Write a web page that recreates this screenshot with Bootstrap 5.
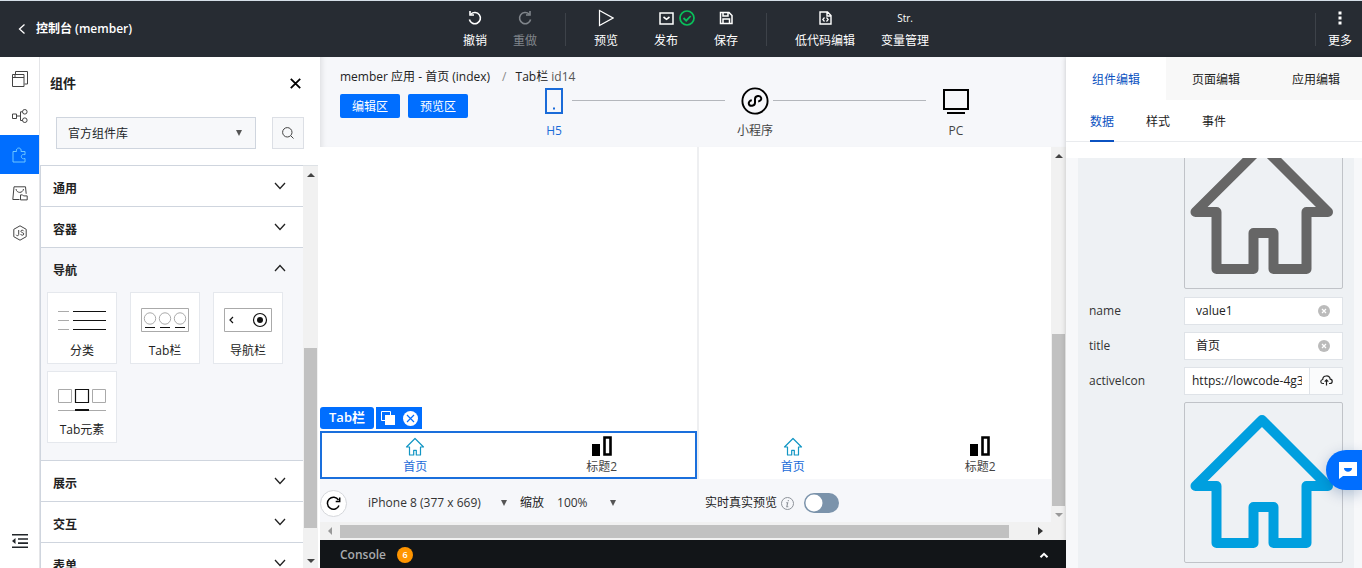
<!DOCTYPE html>
<html lang="zh-CN">
<head>
<meta charset="utf-8">
<meta name="viewport" content="width=device-width, initial-scale=1">
<title>控制台 (member)</title>
<link href="https://cdn.jsdelivr.net/npm/bootstrap@5.3.0/dist/css/bootstrap.min.css" rel="stylesheet">
<style>
  body { font-family: "Open Sans", "Noto Sans CJK SC", sans-serif; font-size: 12px; line-height: 18px; color: #222; background: #fff; }
  button, input, select { font-family: inherit; }
  svg { display: block; flex: none; }
  .plain { border: 0; background: none; padding: 0; color: inherit; }
  .line-icon { fill: none; stroke: currentColor; }

  /* top bar */
  .topbar { background: #272c33; border-top: 1px solid #d5dfe8; height: 57px; color: #fff; }
  .topbar a { color: #fff; text-decoration: none; }
  .side { flex: 1 1 0; }
  .side-end { padding-right: 10px; }
  .toolbar { padding-left: 24px; }
  .tool-set { display: flex; gap: 36px; }
  .tool-set.near { gap: 26px; }
  .tool { display: flex; flex-direction: column; align-items: center; gap: 5px; white-space: nowrap; }
  .tool .glyph { height: 18px; display: flex; align-items: center; position: relative; font-size: 10px; }
  .tool .ok { position: absolute; left: 20px; top: 1px; }
  .tool:disabled { color: #80858b; }
  .rule { width: 1px; height: 33px; background: #3d4249; margin: 0 28px; }

  /* icon rail */
  .rail { width: 40px; border-right: 1px solid #e4e5e8; color: #444; }
  .rail button { width: 39px; height: 39px; display: flex; align-items: center; justify-content: center; }
  .rail .on { background: #006eff; color: #6cc5ff; }

  /* component panel */
  .panel { width: 280px; }
  .panel-head { height: 54px; padding: 0 19px 0 10px; }
  .panel-head h2 { font-size: 13px; margin: 0; padding-top: 2px; }
  .lib { width: 200px; height: 32px; border-radius: 0; border-color: #cfd5de; background-color: #f7f8fa; font-size: 12px; padding: 2px 11px 0; }
  .caret { appearance: none; background-image: url("data:image/svg+xml,%3Csvg xmlns='http://www.w3.org/2000/svg' width='6' height='6'%3E%3Cpath d='M0 0h6L3 6z' fill='%23555'/%3E%3C/svg%3E"); background-repeat: no-repeat; background-size: 6px 6px; background-position: right 13px center; }
  .find { width: 32px; height: 32px; border: 1px solid #dcdfe5; background: #f7f8fa; }
  .list-area { border-left: 1px solid #cfd5de; padding-right: 2px; }
  .group { border-top: 1px solid #cfd5de; }
  .group.open { background: #f6f7fa; height: 213px; }
  .group > button { width: 100%; height: 40px; padding: 6px 17px 0 12px; font-weight: 600; }
  .group > button svg { margin-top: -6px; }
  .tiles { display: flex; flex-wrap: wrap; gap: 7px 13px; padding: 4px 0 0 6px; }
  .tile { width: 70px; height: 72px; background: #fff; border: 1px solid #e5e8ed; display: flex; flex-direction: column; align-items: center; padding: 14px 0 0; gap: 9px; color: #222; }

  /* scroll bars */
  .vbar { width: 15px; background: #f1f1f1; display: flex; flex-direction: column; align-items: center; padding: 7px 0 5px; }
  .vbar .thumb { width: 13px; height: 172px; background: #c1c1c1; margin: auto 0 7px; }
  .list-area .thumb { height: 180px; margin-bottom: 31px; }
  .hbar { height: 18px; background: #f1f1f1; padding-left: 4px; }
  .hbar .thumb { height: 13px; background: #c1c1c1; flex: 1; }
  .hbar .to-end { margin: 0 23px 0 29px; }

  /* stage */
  .stage { background: #f6f7fa; min-width: 0; }
  .stage-head { height: 90px; padding: 11px 20px 0; box-shadow: inset 6px 0 6px -5px rgba(0,0,0,.12); }
  .zone { height: 24px; width: 60px; font-size: 12px; line-height: 18px; padding: 2px 0 0; border: 0; border-radius: 2px; background: #006eff; color: #fff; }
  .crumb-sep { margin: 0 9px 0 12px; color: #888; }
  .steps { margin: 1px 72px 0 68px; }
  .step { width: 36px; margin-left: 12px; display: flex; flex-direction: column; align-items: center; gap: 8px; white-space: nowrap; color: #444; }
  .step:first-child { margin-left: 0; }
  .step .glyph { height: 27px; display: flex; align-items: center; color: #000; }
  .step.on, .step.on .glyph { color: #1a6bd8; }
  .wire { flex: 1; height: 1px; background: #b4b7bc; margin-top: 13px; }
  .device { width: 377px; flex: none; background: #fff; position: relative; display: flex; flex-direction: column; justify-content: flex-end; }
  .device + .device { border-left: 2px solid #eeeff1; }
  .tabs-app { height: 48px; }
  .tabs-app.picked { border: 2px solid #1a6fdc; }
  .tabs-app button { flex: 1; display: flex; flex-direction: column; align-items: center; justify-content: center; gap: 2px; color: #444; padding-top: 2px; }
  .tabs-app .on { color: #1a6bd8; }
  .tabs-app .on svg { color: #1296c4; }
  .tag { position: absolute; left: 0; bottom: 50px; gap: 2px; }
  .tag span { background: #006eff; color: #fff; font-weight: 600; font-size: 13px; width: 54px; height: 22px; line-height: 21px; border-radius: 3px; text-align: center; }
  .tag div { background: #006eff; width: 46px; height: 22px; }
  .ctl { height: 43px; padding-top: 5px; }
  .round { width: 27px; height: 27px; border: 1px solid #d5d7db; border-radius: 50%; background: #fff; display: flex; align-items: center; justify-content: center; }
  .bare { border: 0; background-color: transparent; font-size: 12px; height: 24px; padding: 0; color: #333; }
  .pick-device { width: 152px; margin-left: 21px; }
  .pick-zoom { width: 72px; margin-left: 13px; }
  .live { margin-left: 76px; }
  .form-switch .switch, .form-switch .switch:focus { width: 35px; height: 20px; margin: 0 0 0 10px; border: 0; box-shadow: none; background-color: #7b93ab; background-size: 20px 20px; background-image: url("data:image/svg+xml,%3Csvg xmlns='http://www.w3.org/2000/svg' viewBox='0 0 20 20'%3E%3Ccircle cx='10' cy='10' r='8.500' fill='%23fff'/%3E%3C/svg%3E"); }
  .console { height: 28px; background: #121518; color: #a9abae; font-weight: 600; padding: 2px 17px 0 20px; gap: 11px; }
  .count { width: 16px; height: 16px; border-radius: 50%; background: #ff9500; color: #fff; font-size: 9px; line-height: 16px; text-align: center; }

  /* property panel */
  .props { width: 296px; box-shadow: 0 0 5px rgba(0,0,0,.2); position: relative; background: #fff; }
  .tabs-top button { width: 100px; flex: none; height: 43px; padding-top: 2px; background: #f8f8f8; }
  .tabs-top .on { background: #fff; color: #0b52c1; }
  .tabs-sub { height: 42px; gap: 32px; padding-left: 24px; border-bottom: 1px solid #e9ebee; }
  .tabs-sub button { border-bottom: 2px solid transparent; height: 42px; padding-top: 3px; }
  .tabs-sub .on { color: #0b52c1; border-color: #0b52c1; }
  .form-scroll { margin-top: 16px; background: #f7f8fa; padding: 0 8px 0 12px; }
  .fields { background: #eef1f4; padding: 0 11px; height: 100%; }
  .fields .pic { margin: 0 0 8px 95px; height: 161px; border: 1px solid #c0c3c8; border-radius: 2px; flex: none; }
  .fields .pic.cut { margin-top: -30px; }
  .pic svg { fill: none; stroke: #666; stroke-width: 10px; stroke-linejoin: round; }
  .pic.active svg { stroke: #009fdf; }
  .field { height: 27px; margin-bottom: 8px; }
  .field label { width: 95px; flex: none; color: #333; }
  .box { flex: 1; min-width: 0; height: 28px; border: 1px solid #dfe3e8; background: #fff; display: flex; align-items: center; padding-left: 11px; }
  .box input { flex: 1; min-width: 0; border: 0; background: none; padding: 0; font-size: 12px; color: #222; }
  .box.url { padding-left: 7px; }
  .upload { width: 33px; height: 26px; margin-left: 7px; border-left: 1px solid #dfe3e8; background: #fafbfc; display: flex; align-items: center; justify-content: center; }
  .chat { position: absolute; right: 0; top: 393px; width: 36px; height: 40px; border-radius: 20px 0 0 20px; background: #006eff; box-shadow: 0 4px 14px rgba(0,50,120,.25); display: flex; align-items: center; padding-left: 12px; }
</style>
</head>
<body>
<div class="d-flex flex-column vh-100 overflow-hidden">
  <header class="topbar d-flex align-items-start flex-shrink-0">
    <div class="side d-flex align-items-center h-100 ps-3">
      <a href="#" class="d-flex align-items-center fw-semibold"><svg class="line-icon me-2" width="12" height="12" viewBox="0 0 12 12"><path d="M8.500 1.500L3.500 6l5 4.500" stroke-width="1.300"/></svg>控制台 (member)</a>
    </div>
    <nav class="toolbar d-flex pt-2">
      <div class="tool-set near">
        <button class="plain tool"><span class="glyph"><svg class="line-icon" width="14" height="16" viewBox="0 0 14 16" stroke-width="1.600"><path d="M2.800 4.200A5.600 5.600 0 1 1 1.400 9.500"/><path d="M2 1v4h4"/></svg></span>撤销</button>
        <button class="plain tool" disabled><span class="glyph"><svg class="line-icon" width="14" height="16" viewBox="0 0 14 16" stroke-width="1.600"><path d="M11.200 4.200A5.600 5.600 0 1 0 12.600 9.500"/><path d="M12 1v4H8"/></svg></span>重做</button>
      </div>
      <div class="rule mt-1"></div>
      <div class="tool-set">
        <button class="plain tool"><span class="glyph"><svg class="line-icon" width="16" height="18" viewBox="0 0 16 18"><path d="M1.500 1.500v15L15 9z" stroke-width="1.200"/></svg></span>预览</button>
        <button class="plain tool"><span class="glyph"><svg class="line-icon" width="15" height="13" viewBox="0 0 15 13"><path d="M1 1h13v11H1z" stroke-width="1.500"/><path d="M4.500 5l3 2.300L10.500 5" stroke-width="1.600"/></svg><svg class="ok line-icon" width="16" height="16" viewBox="0 0 16 16" style="color:#0abf5b"><circle cx="8" cy="8" r="7" stroke-width="1.700"/><path d="M4.500 8l2.700 2.700 4.500-4.700" stroke-width="1.800"/></svg></span>发布</button>
        <button class="plain tool"><span class="glyph"><svg class="line-icon" width="14" height="14" viewBox="0 0 14 14" stroke-width="1.500"><path d="M1.500 1.500h8.500l3 3v8H1.500zM4 1.500v3.500h5V2M4 12.500V8h6.500v4.500"/></svg></span>保存</button>
      </div>
      <div class="rule mt-1"></div>
      <div class="tool-set near">
        <button class="plain tool"><span class="glyph"><svg class="line-icon" width="13" height="14" viewBox="0 0 13 14"><path d="M1 1h7.500L12 4.500V13H1zM8 1v4h4" stroke-width="1.400"/><path d="M5.500 6.500L3.800 8.500l1.700 2M7.500 6.500l1.700 2-1.700 2" stroke-width="1.200"/></svg></span>低代码编辑</button>
        <button class="plain tool"><span class="glyph">Str.</span>变量管理</button>
      </div>
    </nav>
    <div class="side side-end d-flex justify-content-end pt-2">
      <div class="rule mt-1 mx-2"></div>
      <button class="plain tool ms-1"><span class="glyph"><svg width="4" height="14" viewBox="0 0 4 14" fill="currentColor"><path d="M.5.500h3v3h-3zM.5 5.500h3v3h-3zM.5 10.500h3v3h-3z"/></svg></span>更多</button>
    </div>
  </header>

  <div class="d-flex flex-fill" style="min-height:0">
    <nav class="rail d-flex flex-column flex-shrink-0">
      <button class="plain" aria-label="页面"><svg class="line-icon mt-1" width="16" height="16" viewBox="0 0 16 16"><path d="M.5 3.500h11.500v12H.5zM.5 6.500H12M3.500 3V.500h12V13H12.500M2 5h2" /></svg></button>
      <button class="plain" aria-label="流程"><svg class="line-icon" width="16" height="14" viewBox="0 0 16 14"><path d="M.5 5h4v4.500h-4zM4.500 7H8M10.500 2.800H8.500v8.700H10.500"/><circle cx="12.800" cy="2.800" r="2.300"/><circle cx="12.800" cy="11.200" r="2.300"/></svg></button>
      <button class="plain on" aria-label="组件"><svg class="line-icon" width="15" height="16" viewBox="0 0 15 16"><path d="M1 4.500h3.500C4 2.500 5 1 6.800 1S9.500 2.500 9 4.500h4v3.200c-2-.8-3.700.2-3.700 1.900s1.700 2.700 3.700 1.900V15H1z"/></svg></button>
      <button class="plain" aria-label="素材"><svg class="line-icon" width="16" height="15" viewBox="0 0 16 15"><path d="M7.500 13.500H.8L2 .8h11.500l.7 7M4 3c.5 4.500 7 4.500 7.500 0M8.500 13.900v-5h2l1 1h3.700v4z"/></svg></button>
      <button class="plain" aria-label="代码"><svg class="line-icon" width="14" height="16" viewBox="0 0 14 16"><path d="M7 .8l6.200 3.500v7.400L7 15.200.8 11.700V4.300z"/><path d="M5.700 5v4.500c0 1.500-2.200 1.500-2.500.3M10.700 6.200c-.5-1.400-3-1.200-2.800.2.200 1.500 3 .9 2.900 2.600-.1 1.600-2.800 1.600-3.200.1"/></svg></button>
      <button class="plain mt-auto mb-2 text-dark" aria-label="收起"><svg width="16" height="14" viewBox="0 0 16 14" fill="currentColor"><path d="M0 0h16v1.600H0zM6 4.200h10v1.600H6zM6 8.300h10v1.600H6zM0 12.400h16V14H0zM3.500 4v6L0 7z"/></svg></button>
    </nav>

    <aside class="panel d-flex flex-column flex-shrink-0">
      <div class="panel-head d-flex justify-content-between align-items-center">
        <h2 class="fw-semibold">组件</h2>
        <button class="plain" aria-label="关闭"><svg class="line-icon text-black" width="11" height="11" viewBox="0 0 11 11"><path d="M.8.800l9.400 9.400M10.200.800L.8 10.200" stroke-width="1.800"/></svg></button>
      </div>
      <div class="d-flex gap-3 px-3 pt-2 pb-3">
        <select class="form-select lib caret" aria-label="组件库"><option>官方组件库</option></select>
        <button class="find p-0 d-flex align-items-center justify-content-center" aria-label="搜索"><svg class="line-icon" width="12" height="12" viewBox="0 0 12 12" style="color:#444"><circle cx="5.300" cy="5.300" r="4.700"/><path d="M8.800 8.800L11.500 11.500"/></svg></button>
      </div>
      <div class="list-area d-flex flex-fill overflow-hidden">
        <div class="flex-fill" style="width:0">
          <section class="group"><button class="plain d-flex justify-content-between align-items-center">通用<svg class="line-icon" width="12" height="8" viewBox="0 0 12 8"><path d="M1 1l5 5.500L11 1" stroke-width="1.300"/></svg></button></section>
          <section class="group"><button class="plain d-flex justify-content-between align-items-center">容器<svg class="line-icon" width="12" height="8" viewBox="0 0 12 8"><path d="M1 1l5 5.500L11 1" stroke-width="1.300"/></svg></button></section>
          <section class="group open"><button class="plain d-flex justify-content-between align-items-center">导航<svg class="line-icon" width="12" height="8" viewBox="0 0 12 8"><path d="M1 7l5-5.500L11 7" stroke-width="1.300"/></svg></button>
            <div class="tiles">
              <button class="tile"><svg width="48" height="26" viewBox="0 0 48 26"><path d="M0 4.500h11M0 13.500h11M0 22.500h11" stroke="#aaa"/><path d="M15 4.500h33M15 13.500h33M15 22.500h33" stroke="#111"/></svg>分类</button>
              <button class="tile"><svg width="48" height="26" viewBox="0 0 48 26" fill="none"><path d="M.5 1.500h47v23H.5z" stroke="#aaa"/><g stroke="#aaa"><circle cx="9" cy="11.500" r="5.700"/><circle cx="24" cy="11.500" r="5.700"/><circle cx="39" cy="11.500" r="5.700"/></g><path d="M4 20.500h10M19 20.500h10M34 20.500h10" stroke="#111"/></svg>Tab栏</button>
              <button class="tile"><svg width="48" height="26" viewBox="0 0 48 26" fill="none"><path d="M.5 1.500h47v23H.5z" stroke="#aaa"/><path d="M9 10l-3 3 3 3" stroke="#111" stroke-width="1.200"/><circle cx="36" cy="13" r="6.500" stroke="#111" stroke-width="1.200"/><circle cx="36" cy="13" r="3" fill="#111"/></svg>导航栏</button>
              <button class="tile"><svg width="48" height="26" viewBox="0 0 48 26" fill="none"><path d="M.5 3.500h13v13H.5zM34.500 3.500h13v13h-13zM0 24.500h48" stroke="#aaa"/><path d="M17.500 3.500h13v13h-13z" stroke="#111" stroke-width="1.200"/><path d="M17 24h14" stroke="#111" stroke-width="2"/></svg>Tab元素</button>
            </div>
          </section>
          <section class="group"><button class="plain d-flex justify-content-between align-items-center">展示<svg class="line-icon" width="12" height="8" viewBox="0 0 12 8"><path d="M1 1l5 5.500L11 1" stroke-width="1.300"/></svg></button></section>
          <section class="group"><button class="plain d-flex justify-content-between align-items-center">交互<svg class="line-icon" width="12" height="8" viewBox="0 0 12 8"><path d="M1 1l5 5.500L11 1" stroke-width="1.300"/></svg></button></section>
          <section class="group"><button class="plain d-flex justify-content-between align-items-center">表单<svg class="line-icon" width="12" height="8" viewBox="0 0 12 8"><path d="M1 1l5 5.500L11 1" stroke-width="1.300"/></svg></button></section>
        </div>
        <div class="vbar border-top">
          <svg width="8" height="4" viewBox="0 0 8 4"><path d="M0 4l4-4 4 4z" fill="#444"/></svg>
          <div class="thumb"></div>
          <svg width="8" height="4" viewBox="0 0 8 4"><path d="M0 0l4 4 4-4z" fill="#444"/></svg>
        </div>
      </div>
    </aside>

    <main class="stage d-flex flex-column flex-fill">
      <div class="stage-head flex-shrink-0">
        <div class="text-nowrap"><span>member 应用 - 首页 (index)</span><span class="crumb-sep">/</span><span>Tab栏 <span style="color:#555">id14</span></span></div>
        <div class="d-flex">
          <div class="d-flex gap-2 pt-2 mt-0"><button class="zone">编辑区</button><button class="zone">预览区</button></div>
          <div class="steps d-flex flex-fill">
            <div class="step on"><span class="glyph"><svg class="line-icon" width="18" height="26" viewBox="0 0 18 26"><path d="M1 1h16v24H1z" stroke-width="2"/><path d="M8 20.500h2" stroke-width="2"/></svg></span>H5</div>
            <div class="wire"></div>
            <div class="step"><span class="glyph"><svg class="line-icon" width="28" height="28" viewBox="0 0 28 28"><circle cx="14" cy="14" r="12.600" stroke-width="1.900"/><path d="M10.800 13.300c-2.200.3-3.300 1.900-3 3.400.7 3.200 6.200 2.500 6.200-1V12c0-3.300 5.300-4.100 6.200-1 .4 1.500-.8 3.200-3 3.400" stroke-width="2"/></svg></span>小程序</div>
            <div class="wire"></div>
            <div class="step"><span class="glyph"><svg class="line-icon" width="26" height="26" viewBox="0 0 26 26" stroke-width="2"><path d="M1 2h24v19H1zM4 25h18"/></svg></span>PC</div>
          </div>
        </div>
      </div>
      <div class="d-flex flex-fill" style="min-height:0">
        <div class="d-flex flex-column flex-fill" style="min-width:0">
          <div class="d-flex flex-fill overflow-hidden">
            <div class="device">
              <div class="tag d-flex"><span>Tab栏</span><div class="d-flex align-items-center justify-content-center gap-2"><svg width="14" height="14" viewBox="0 0 14 14"><path d="M.5.500h9v9h-9z" fill="none" stroke="#fff"/><path d="M4 4h10v10H4z" fill="#fff"/></svg><svg width="15" height="15" viewBox="0 0 15 15"><circle cx="7.500" cy="7.500" r="7.500" fill="#fff"/><path d="M4 4l7 7M11 4l-7 7" stroke="#006eff" stroke-width="1.200"/></svg></div></div>
              <div class="tabs-app picked d-flex">
                <button class="plain on"><svg class="line-icon" width="20" height="19" viewBox="0 0 20 19"><path d="M10 1.500L1.500 10h3v8h4.200v-4.700h2.600V18h4.200v-8h3z" stroke-width="1.200" stroke-linejoin="round"/></svg>首页</button>
                <button class="plain"><svg width="20" height="20" viewBox="0 0 20 20"><path d="M0 8h8v12H0z"/><path d="M12.500 1.500h6v17h-6z" fill="none" stroke="#000" stroke-width="2.600"/></svg>标题2</button>
              </div>
            </div>
            <div class="device">
              <div class="tabs-app d-flex">
                <button class="plain on"><svg class="line-icon" width="20" height="19" viewBox="0 0 20 19"><path d="M10 1.500L1.500 10h3v8h4.200v-4.700h2.600V18h4.200v-8h3z" stroke-width="1.200" stroke-linejoin="round"/></svg>首页</button>
                <button class="plain"><svg width="20" height="20" viewBox="0 0 20 20"><path d="M0 8h8v12H0z"/><path d="M12.500 1.500h6v17h-6z" fill="none" stroke="#000" stroke-width="2.600"/></svg>标题2</button>
              </div>
            </div>
          </div>
          <div class="ctl d-flex align-items-center flex-shrink-0">
            <button class="round p-0" aria-label="刷新"><svg class="line-icon" width="15" height="15" viewBox="0 0 15 15" stroke-width="1.500"><path d="M13 9.500A6 6 0 1 1 12.500 4"/><path d="M13.700 1.500v4h-4"/></svg></button>
            <select class="bare caret pick-device" aria-label="设备"><option>iPhone 8 (377 x 669)</option></select>
            <label for="zoom">缩放</label>
            <select id="zoom" class="bare caret pick-zoom"><option>100%</option></select>
            <label for="live" class="live">实时真实预览</label>
            <svg class="line-icon ms-1" width="13" height="13" viewBox="0 0 13 13" style="color:#8d9299"><circle cx="6.500" cy="6.500" r="6"/><path d="M7.300 3v1.200M5.200 5.700h1.500L5.800 9.700h1.500" stroke-width="1.100"/></svg>
            <div class="form-switch p-0 d-flex"><input id="live" class="form-check-input switch" type="checkbox" role="switch"></div>
          </div>
        </div>
        <div class="vbar">
          <svg width="8" height="4" viewBox="0 0 8 4"><path d="M0 4l4-4 4 4z" fill="#444"/></svg>
          <div class="thumb"></div>
          <svg width="8" height="4" viewBox="0 0 8 4"><path d="M0 0l4 4 4-4z" fill="#999"/></svg>
        </div>
      </div>
      <div class="hbar d-flex align-items-center flex-shrink-0">
        <svg width="4" height="8" viewBox="0 0 4 8" class="mx-1"><path d="M4 0v8L0 4z" fill="#999"/></svg>
        <div class="thumb ms-1"></div>
        <svg class="to-end" width="5" height="8" viewBox="0 0 5 8"><path d="M0 0v8l5-4z" fill="#333"/></svg>
      </div>
      <div class="console d-flex align-items-center flex-shrink-0">Console<span class="count">6</span><button class="plain ms-auto text-white" aria-label="展开"><svg class="line-icon" width="10" height="6" viewBox="0 0 10 6"><path d="M1.500 5.200L5 1.800l3.500 3.400" stroke-width="2"/></svg></button></div>
    </main>

    <aside class="props d-flex flex-column flex-shrink-0">
      <div class="tabs-top d-flex overflow-hidden flex-shrink-0">
        <button class="plain on">组件编辑</button><button class="plain">页面编辑</button><button class="plain">应用编辑</button>
      </div>
      <div class="tabs-sub d-flex flex-shrink-0">
        <button class="plain on">数据</button><button class="plain">样式</button><button class="plain">事件</button>
      </div>
      <div class="form-scroll flex-fill overflow-hidden">
        <div class="fields d-flex flex-column">
          <div class="pic cut"><svg width="157" height="159" viewBox="0 0 157 159"><path d="M77 17L10.500 83h21v57h37v-36h20v36h33V83h21.500z"/></svg></div>
          <div class="field d-flex align-items-center"><label for="f-name">name</label><div class="box"><input id="f-name" value="value1"><button class="plain me-2 pe-1" aria-label="清除"><svg width="12" height="12" viewBox="0 0 12 12"><circle cx="6" cy="6" r="6" fill="#bbb"/><path d="M4 4l4 4M8 4l-4 4" stroke="#fff" stroke-width="1.200"/></svg></button></div></div>
          <div class="field d-flex align-items-center"><label for="f-title">title</label><div class="box"><input id="f-title" value="首页"><button class="plain me-2 pe-1" aria-label="清除"><svg width="12" height="12" viewBox="0 0 12 12"><circle cx="6" cy="6" r="6" fill="#bbb"/><path d="M4 4l4 4M8 4l-4 4" stroke="#fff" stroke-width="1.200"/></svg></button></div></div>
          <div class="field d-flex align-items-center"><label for="f-icon">activeIcon</label><div class="box url"><input id="f-icon" value="https://lowcode-4g3n"><button class="plain upload" aria-label="上传"><svg class="line-icon" width="13" height="11" viewBox="0 0 13 11" stroke-width="1.200"><path d="M4 8.500H3C.2 8.500 0 5 2.700 4.500 3 0 9.500-.3 10.200 4.200 13 4.500 12.800 8.500 10 8.500H9M6.500 10.500V5M4.700 6.700l1.800-1.800 1.800 1.800"/></svg></button></div></div>
          <div class="pic active"><svg width="157" height="159" viewBox="0 0 157 159"><path d="M77 17L10.500 83h21v57h37v-36h20v36h33V83h21.500z"/></svg></div>
        </div>
      </div>
      <button class="plain chat" aria-label="在线客服"><svg width="19" height="17" viewBox="0 0 19 17"><path d="M1 0h18v14H5l-4 3z" fill="#fff"/><path d="M6 6h8c0 5-8 5-8 0z" fill="#006eff"/></svg></button>
    </aside>
  </div>
</div>
<script src="https://cdn.jsdelivr.net/npm/bootstrap@5.3.0/dist/js/bootstrap.bundle.min.js"></script>
</body>
</html>
